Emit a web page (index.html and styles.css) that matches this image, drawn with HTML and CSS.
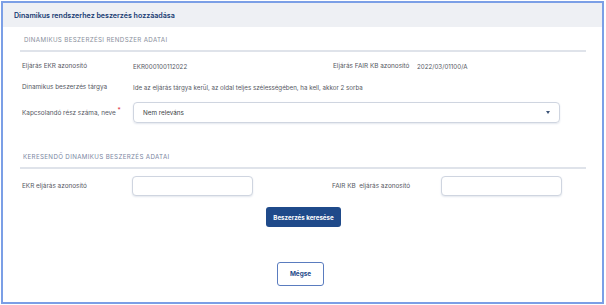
FILE: index.html
```html
<!DOCTYPE html>
<html lang="hu">
<head>
  <meta charset="UTF-8" />
  <title>Dinamikus rendszerhez beszerzés hozzáadása</title>
  <link rel="stylesheet" href="styles.css">
</head>
<body>
  <div class="panel">
    <div class="panel-head">Dinamikus rendszerhez beszerzés hozzáadása</div>

    <div class="panel-body">
      <!-- rendszer adatai -->
      <div class="section-title">Dinamikus beszerzési rendszer adatai</div>
      <div class="info-grid">
        <div class="label">Eljárás EKR azonosító</div>
        <div class="value">EKR000100112022</div>
        <div class="label">Eljárás FAIR KB azonosító</div>
        <div class="value">2022/03/01100/A</div>

        <div class="label">Dinamikus beszerzés tárgya</div>
        <div class="value wide">Ide az eljárás tárgya kerül, az oldal teljes szélességében, ha kell, akkor 2 sorba</div>
      </div>

      <div class="select-row">
        <div class="label">Kapcsolandó rész száma, neve <span class="req">*</span></div>
        <div class="select">
          <span>Nem releváns</span>
          <span class="caret"></span>
        </div>
      </div>

      <!-- keresés -->
      <div class="section-title second">Keresendő dinamikus beszerzés adatai</div>
      <div class="search-grid">
        <div class="label">EKR eljárás azonosító</div>
        <input class="text-input" type="text" />
        <div></div>
        <div class="label">FAIR KB&nbsp; eljárás azonosító</div>
        <input class="text-input" type="text" />
      </div>

      <div class="btn-row">
        <button class="btn-primary">Beszerzés keresése</button>
      </div>

      <div class="btn-row cancel-row">
        <button class="btn-outline">Mégse</button>
      </div>
    </div>
  </div>
</body>
</html>
```

FILE: styles.css
```css
:root {
  --navy: #1f4a8a;
  --frame: #7b9fe6;
  --muted: #6f7480;
  --line: #dfe3ea;
}

* {
  box-sizing: border-box;
}

body {
  margin: 0;
  padding: 1px 2px 0 1px;
  background: #fff;
  font-family: Inter, "Open Sans", sans-serif;
  color: #4a4d55;
}

.panel {
  border: 2px solid var(--frame);
  height: 303px;
  box-shadow: 0 1px 0 #c9d8f6;
}

.panel-head {
  background: #eef0f4;
  height: 24px;
  padding: 0 11px;
  display: flex;
  align-items: center;
  font-size: 7.1px;
  font-weight: 600;
  color: #163a72;
}

.panel-body {
  padding: 0 16px 0 17px;
}

.section-title {
  text-transform: uppercase;
  font-size: 6.2px;
  letter-spacing: 0.35px;
  color: #8a8f9c;
  padding: 9px 0 7px 4px;
  border-bottom: 2px solid var(--line);
}

.section-title.second {
  margin-top: 21px;
  color: #7d88a3;
  padding-left: 3px;
}

.label,
.value {
  font-size: 6.4px;
  color: #55585f;
  padding-left: 2px;
  white-space: nowrap;
}

.value {
  font-size: 6.2px;
  padding-left: 1px;
}

.info-grid {
  display: grid;
  grid-template-columns: 112px 199px 85px 1fr;
  align-items: center;
  row-gap: 13px;
  padding-top: 10px;
}

.info-grid .wide {
  grid-column: 2 / 5;
}

.select-row {
  display: grid;
  grid-template-columns: 113px 427px;
  align-items: center;
  margin-top: 11px;
}

.req {
  color: #e0354a;
  position: relative;
  top: -3px;
}

.select {
  height: 21px;
  border: 1px solid #cfd5e0;
  border-radius: 4px;
  box-shadow: 0 1px 2px #e3e7ee;
  display: flex;
  align-items: center;
  justify-content: space-between;
  padding: 0 9px;
  font-size: 6.3px;
  color: #3b3e45;
}

.caret {
  width: 0;
  height: 0;
  border-left: 2.5px solid transparent;
  border-right: 2.5px solid transparent;
  border-top: 3px solid #3d5478;
}

.search-grid {
  display: grid;
  grid-template-columns: 112px 121px 77px 111px 121px;
  align-items: center;
  padding-top: 7px;
}

.text-input {
  height: 20px;
  width: 121px;
  border: 1px solid #cfd5e0;
  border-radius: 4px;
  box-shadow: 0 1px 2px #e3e7ee;
  background: #fff;
  margin: 0;
}

.btn-row {
  display: flex;
  justify-content: center;
  padding-top: 11px;
}

.btn-primary {
  background: var(--navy);
  color: #fff;
  border: none;
  border-radius: 3px;
  height: 20px;
  width: 75px;
  font-family: inherit;
  font-size: 6.2px;
  font-weight: 700;
  margin-left: 1px;
}

.cancel-row {
  padding-top: 35px;
}

.btn-outline {
  background: #fff;
  color: var(--navy);
  border: 1.5px solid #5a7cbf;
  border-radius: 3px;
  height: 24px;
  width: 47px;
  font-family: inherit;
  font-size: 6.4px;
  font-weight: 700;
  margin-left: -5px;
}
```
